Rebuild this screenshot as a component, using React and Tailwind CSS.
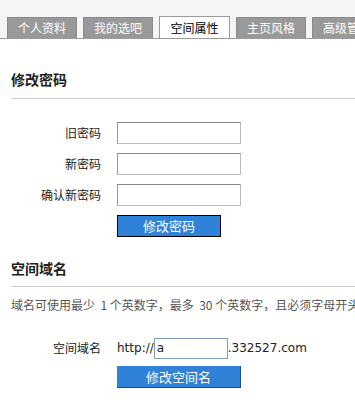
import React from "react";

const tabs = ["个人资料", "我的选吧", "空间属性", "主页风格", "高级管理"];

function Row({ label, children }) {
	return (
		<div className="flex items-center h-[31px]">
			<div className="w-[90px] text-right text-[12px] text-[#222]">{label}</div>
			<div className="ml-[16px]">{children}</div>
		</div>
	);
}

export default function App() {
	return (
		<div
			className="w-[355px] h-[410px] overflow-hidden bg-white"
			style={{ fontFamily: '"Noto Sans CJK SC", "Liberation Sans", sans-serif' }}
		>
			{/* tab bar */}
			<div className="h-[39px] bg-[#f5f5f5] border-b border-[#9a9a9a] flex items-end pl-[7px] gap-[6px] overflow-hidden whitespace-nowrap">
				{tabs.map((t) => {
					const active = t === "空间属性";
					return active ? (
						<div
							key={t}
							className="shrink-0 w-[71px] h-[23px] -mb-px bg-white border border-[#9a9a9a] border-b-white flex items-center justify-center text-[12px] text-black"
						>
							{t}
						</div>
					) : (
						<div
							key={t}
							className="shrink-0 w-[70px] h-[21px] bg-[#999] border border-[#8a8a8a] border-b-0 flex items-center justify-center text-[12px] text-white"
						>
							{t}
						</div>
					);
				})}
			</div>

			<div className="pl-[11px]">
				<div className="pt-[31px] pb-[10px] border-b border-[#cfcfcf] text-[14px] font-bold text-[#222] leading-[18px]">
					修改密码
				</div>

				<div className="pt-[18px]">
					<Row label="旧密码">
						<input className="w-[124px] h-[22px] border border-[#bbb] border-t-[#888] border-l-[#999] outline-none" />
					</Row>
					<Row label="新密码">
						<input className="w-[124px] h-[22px] border border-[#bbb] border-t-[#888] border-l-[#999] outline-none" />
					</Row>
					<Row label="确认新密码">
						<input className="w-[124px] h-[22px] border border-[#bbb] border-t-[#888] border-l-[#999] outline-none" />
					</Row>
					<div className="pl-[106px] pt-[2px]">
						<button className="w-[104px] h-[22px] bg-[#2f82d8] border border-black text-white text-[13px] leading-none">
							修改密码
						</button>
					</div>
				</div>

				<div className="pt-[22px] pb-[9px] border-b border-[#cfcfcf] text-[14px] font-bold text-[#222] leading-[18px]">
					空间域名
				</div>
				<div className="pt-[9px] text-[12px] text-[#555] whitespace-nowrap overflow-hidden">
					域名可使用最少{"\u00a0\u00a0"}1{"\u00a0"}个英数字，最多{"\u00a0\u00a0"}30{"\u00a0"}个英数字，且必须字母开头
				</div>

				<div className="pt-[24px] flex items-center">
					<div className="w-[90px] text-right text-[12px] text-[#222]">空间域名</div>
					<div className="ml-[16px] flex items-center text-[12px] text-[#222]" style={{ fontFamily: '"DejaVu Sans", sans-serif' }}>
						<span>http://</span>
						<input
							defaultValue="a"
							className="w-[74px] h-[21px] border border-[#7f9db9] px-[2px] text-[12px] outline-none"
						/>
						<span>.332527.com</span>
					</div>
				</div>
				<div className="pl-[106px] pt-[4px]">
					<button className="w-[124px] h-[22px] bg-[#2f82d8] border-b border-r border-[#1d4f86] text-white text-[13px] leading-none">
						修改空间名
					</button>
				</div>
			</div>
		</div>
	);
}
